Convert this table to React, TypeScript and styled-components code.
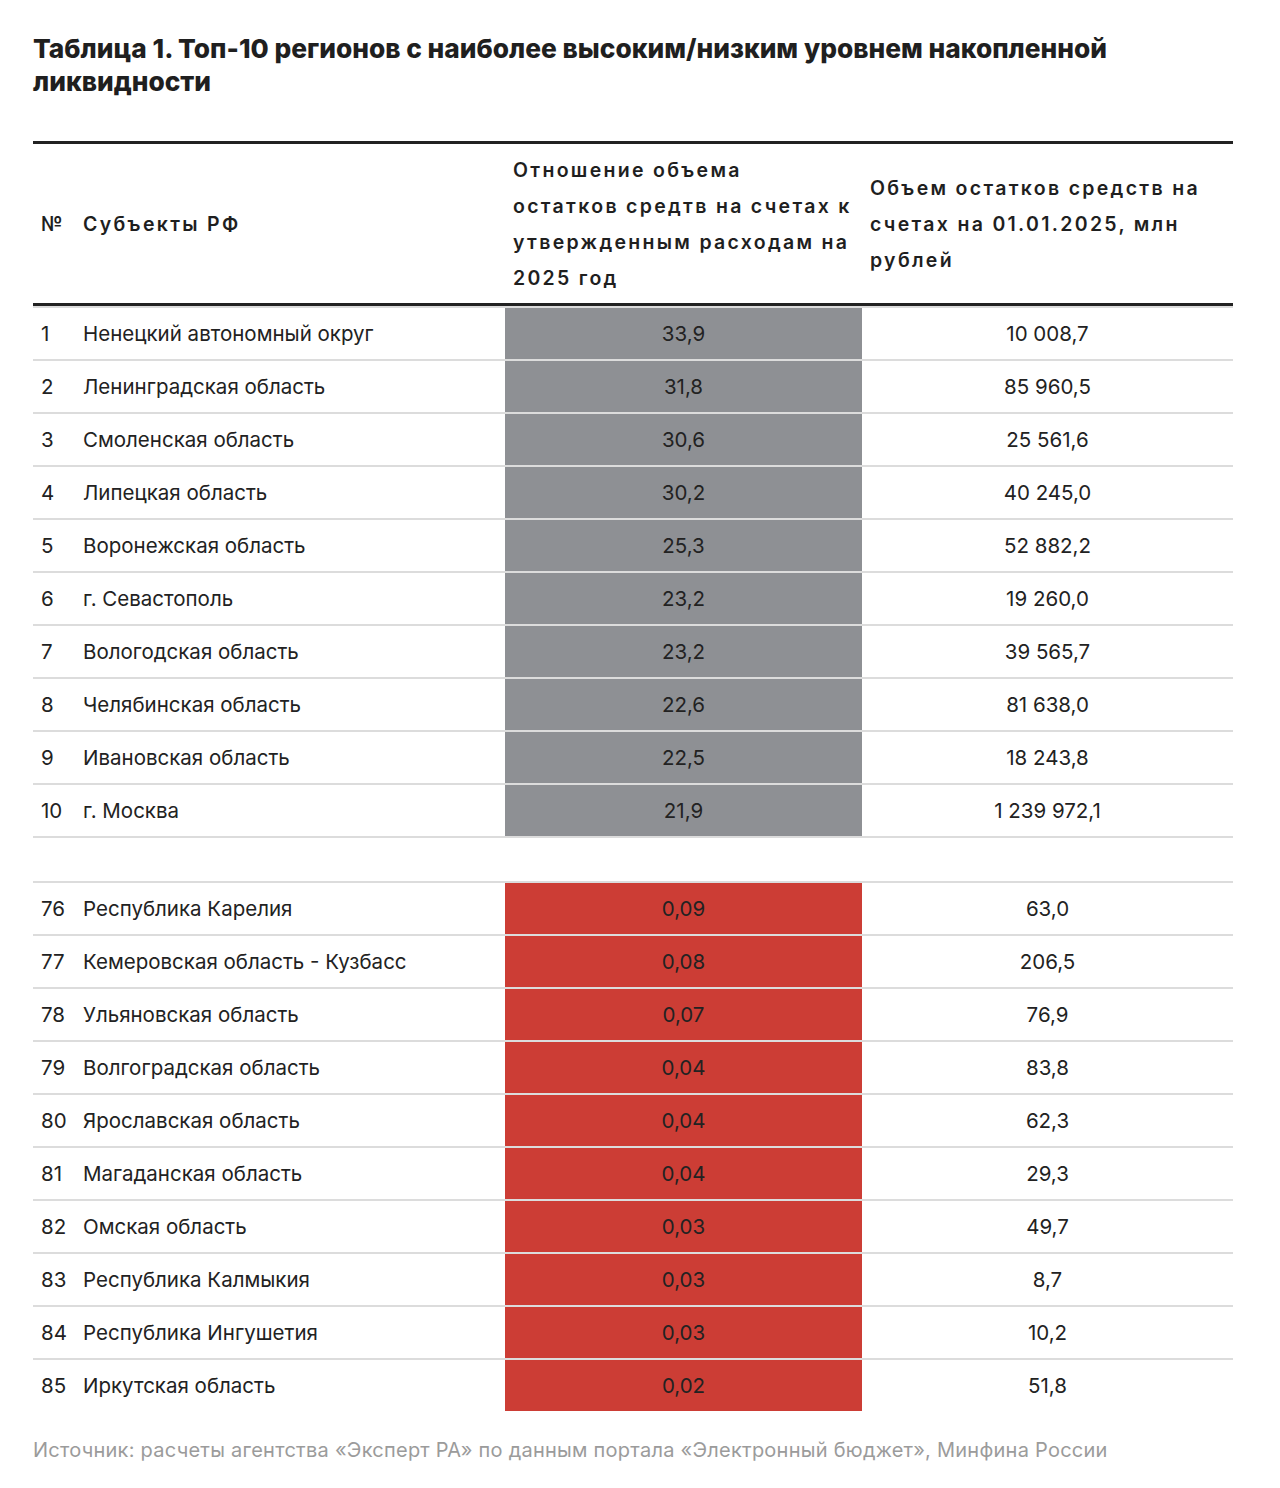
import React from "react";
import styled, { createGlobalStyle } from "styled-components";

const Global = createGlobalStyle`
  html, body { margin: 0; padding: 0; background: #ffffff; }
  body { font-family: Inter, "Noto Sans", sans-serif; color: #222222; }
`;

const Page = styled.div`
  width: 1200px;
  padding: 32px 47px 40px 33px;
`;

const Title = styled.h1`
  margin: 0 0 43px 0;
  font-family: Inter, "Noto Sans", sans-serif;
  font-weight: 800;
  font-size: 26.3px;
  line-height: 33px;
  letter-spacing: 0;
  color: #1f1f1f;
`;

const Table = styled.div`
  display: flex;
  flex-direction: column;
  border-top: 3px solid #222222;
`;

const cols = "42px 430px 357px 371px";

const HeadRow = styled.div`
  display: grid;
  grid-template-columns: ${cols};
  align-items: center;
  border-bottom: 3px solid #222222;
  min-height: 159px;
`;

const HeadCell = styled.div`
  padding: 8px 8px 7px 8px;
  font-family: Inter, "Noto Sans", sans-serif;
  font-weight: 600;
  font-size: 19.5px;
  line-height: 36px;
  letter-spacing: 2.3px;
  color: #1f1f1f;
  white-space: nowrap;
`;

const Row = styled.div`
  display: grid;
  grid-template-columns: ${cols};
  height: 53px;
  border-top: 2px solid #dcdcdc;
  box-sizing: border-box;
`;

const Spacer = styled.div`
  height: 45px;
  border-top: 2px solid #dcdcdc;
  box-sizing: border-box;
`;

const Cell = styled.div<{ $align?: "left" | "center"; $bg?: string }>`
  display: flex;
  align-items: center;
  justify-content: ${(p) => (p.$align === "center" ? "center" : "flex-start")};
  padding: 0 8px;
  background: ${(p) => p.$bg || "transparent"};
  font-size: 20.5px;
  letter-spacing: 0;
  color: #222222;
  white-space: nowrap;
`;

const Source = styled.p`
  margin: 27px 0 0 0;
  font-size: 20px;
  color: #9b9b9b;
  letter-spacing: 0.25px;
`;

type R = [string, string, string, string];

const top: R[] = [
  ["1", "Ненецкий автономный округ", "33,9", "10 008,7"],
  ["2", "Ленинградская область", "31,8", "85 960,5"],
  ["3", "Смоленская область", "30,6", "25 561,6"],
  ["4", "Липецкая область", "30,2", "40 245,0"],
  ["5", "Воронежская область", "25,3", "52 882,2"],
  ["6", "г. Севастополь", "23,2", "19 260,0"],
  ["7", "Вологодская область", "23,2", "39 565,7"],
  ["8", "Челябинская область", "22,6", "81 638,0"],
  ["9", "Ивановская область", "22,5", "18 243,8"],
  ["10", "г. Москва", "21,9", "1 239 972,1"],
];

const bottom: R[] = [
  ["76", "Республика Карелия", "0,09", "63,0"],
  ["77", "Кемеровская область - Кузбасс", "0,08", "206,5"],
  ["78", "Ульяновская область", "0,07", "76,9"],
  ["79", "Волгоградская область", "0,04", "83,8"],
  ["80", "Ярославская область", "0,04", "62,3"],
  ["81", "Магаданская область", "0,04", "29,3"],
  ["82", "Омская область", "0,03", "49,7"],
  ["83", "Республика Калмыкия", "0,03", "8,7"],
  ["84", "Республика Ингушетия", "0,03", "10,2"],
  ["85", "Иркутская область", "0,02", "51,8"],
];

const GRAY = "#8e9094";
const RED = "#cc3d35";

const DataRow = ({ r, bg }: { r: R; bg: string }) => (
  <Row>
    <Cell>{r[0]}</Cell>
    <Cell>{r[1]}</Cell>
    <Cell $align="center" $bg={bg}>{r[2]}</Cell>
    <Cell $align="center">{r[3]}</Cell>
  </Row>
);

export default function App() {
  return (
    <>
      <Global />
      <Page>
        <Title>
          Таблица 1. Топ-10 регионов с наиболее высоким/низким уровнем накопленной
          <br />
          ликвидности
        </Title>
        <Table>
          <HeadRow>
            <HeadCell>№</HeadCell>
            <HeadCell>Субъекты РФ</HeadCell>
            <HeadCell>
              Отношение объема
              <br />
              остатков средтв на счетах к
              <br />
              утвержденным расходам на
              <br />
              2025 год
            </HeadCell>
            <HeadCell>
              Объем остатков средств на
              <br />
              счетах на 01.01.2025, млн
              <br />
              рублей
            </HeadCell>
          </HeadRow>
          {top.map((r) => (
            <DataRow key={r[0]} r={r} bg={GRAY} />
          ))}
          <Spacer />
          {bottom.map((r) => (
            <DataRow key={r[0]} r={r} bg={RED} />
          ))}
        </Table>
        <Source>
          Источник: расчеты агентства «Эксперт РА» по данным портала «Электронный бюджет», Минфина России
        </Source>
      </Page>
    </>
  );
}
